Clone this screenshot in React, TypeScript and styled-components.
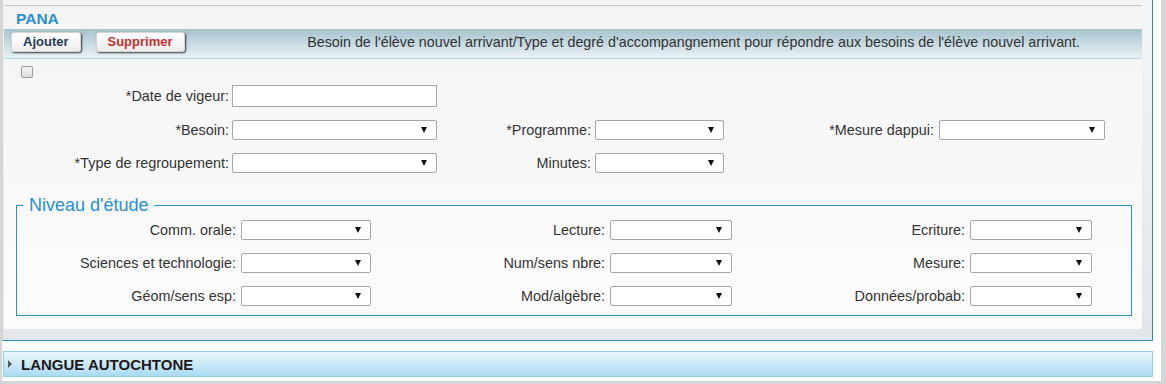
import styled, { createGlobalStyle } from 'styled-components';

const GlobalStyle = createGlobalStyle`
    html, body {
        margin: 0;
        padding: 0;
    }
    body {
        background: #d6d6d6;
        font-family: "Liberation Sans", Arial, Helvetica, sans-serif;
        font-size: 14.4px;
        color: #333;
    }
    * { box-sizing: border-box; }
`;

const Page = styled.div`
    width: 1166px;
    height: 384px;
    padding: 0 5px 3px 2px;
`;

const Wrapper = styled.div`
    display: flex;
    flex-direction: column;
    gap: 10px;
    height: 100%;
    padding: 0 8px 3px 0;
    background: #fff;
`;

const Panel = styled.section`
    padding: 5px 10px 11px 1px;
    border-left: 1px solid #d2d2d2;
    border-right: 1px solid #2a8cc4;
    border-bottom: 1px solid #2a8cc4;
    background: linear-gradient(#f3f5f7, #e3e6ea);
`;

const Content = styled.div`
    padding-bottom: 13px;
    border-top: 1px solid #c6c6c6;
    background: linear-gradient(#f4f4f4, #fcfcfc);
`;

const Title = styled.h2`
    margin: 0;
    height: 23px;
    padding: 1px 0 0 12px;
    font-size: 15.5px;
    line-height: 23px;
    font-weight: bold;
    color: #2b8fcf;
`;

const Toolbar = styled.div`
    display: flex;
    align-items: flex-start;
    height: 30px;
    padding: 3px 0 0 7px;
    border-bottom: 1px solid #b7d7ea;
    background: linear-gradient(#a6c2ce, #e9f2f6);
`;

const Button = styled.button<{ $danger?: boolean }>`
    height: 20px;
    margin-right: 15px;
    padding: 0 11px;
    border: 1px solid #d4d4d4;
    border-radius: 3px;
    background: linear-gradient(#ffffff, #ececec);
    box-shadow: 1px 1px 2px rgba(0, 0, 0, 0.75);
    font-family: inherit;
    font-size: 13px;
    font-weight: bold;
    line-height: 18px;
    color: ${p => (p.$danger ? '#c43030' : '#1d3b5b')};
`;

const Description = styled.div`
    margin-left: auto;
    padding-right: 62px;
    font-size: 14.3px;
    line-height: 20px;
    color: #333;
    white-space: nowrap;
`;

const Check = styled.input.attrs({ type: 'checkbox' })`
    appearance: none;
    display: block;
    width: 12px;
    height: 12px;
    margin: 7px 0 0 17px;
    border: 1px solid #9a9a9a;
    border-radius: 2px;
    background: linear-gradient(#f4f4f4, #dcdcdc);
`;

const FormGrid = styled.div`
    display: grid;
    grid-template-columns: 228px 205px 158px 129px 215px 166px;
    grid-template-rows: 22px 20px 20px;
    row-gap: 13px;
    align-items: center;
    margin-top: 7px;
`;

const Label = styled.label<{ $pad: number }>`
    padding-right: ${p => p.$pad}px;
    text-align: right;
    white-space: nowrap;
    color: #333;
`;

const TextInput = styled.input`
    width: 100%;
    height: 22px;
    margin: 0;
    border: 1px solid #a9a9a9;
    background: #fff;
`;

const SelectBox = styled.div`
    position: relative;
    height: 20px;
`;

const NativeSelect = styled.select`
    appearance: none;
    width: 100%;
    height: 100%;
    margin: 0;
    padding: 0 4px;
    border: 1px solid #a6a6a6;
    border-radius: 2px;
    background: #fff;
    font: 13px "Liberation Sans", Arial, sans-serif;
`;

const Caret = styled.span`
    position: absolute;
    right: 10px;
    top: 7px;
    border-left: 3px solid transparent;
    border-right: 3px solid transparent;
    border-top: 6px solid #111;
    pointer-events: none;
`;

const Fieldset = styled.fieldset`
    margin: 22px 10px 0 12px;
    padding: 5px 0 9px;
    border: 1px solid #2a90c8;
`;

const Legend = styled.legend`
    margin-left: 6px;
    padding: 0 5px 0 6px;
    font-size: 18px;
    line-height: 20px;
    color: #2b8fcf;
`;

const LevelGrid = styled.div`
    display: grid;
    grid-template-columns: 224px 130px 239px 122px 238px 122px;
    grid-auto-rows: 20px;
    row-gap: 13px;
    align-items: center;
`;

const Collapsed = styled.div`
    display: flex;
    align-items: center;
    height: 26px;
    margin-left: 1px;
    padding-left: 4px;
    border: 1px solid #95cbe6;
    background: linear-gradient(#ecf7fd, #a9dbf2);
    font-size: 15px;
    font-weight: bold;
    color: #231818;
`;

const Arrow = styled.span`
    width: 0;
    height: 0;
    margin-right: 9px;
    border-top: 4px solid transparent;
    border-bottom: 4px solid transparent;
    border-left: 4px solid #5a5a5a;
`;

function Select() {
    return (
        <SelectBox>
            <NativeSelect defaultValue="">
                <option value=""></option>
            </NativeSelect>
            <Caret />
        </SelectBox>
    );
}

const mainPads = [3, 4, 5];

const mainRows: (string | null)[][] = [
    ['*Besoin:', '*Programme:', '*Mesure dappui:'],
    ['*Type de regroupement:', 'Minutes:', null],
];

const levelRows = [
    ['Comm. orale:', 'Lecture:', 'Ecriture:'],
    ['Sciences et technologie:', 'Num/sens nbre:', 'Mesure:'],
    ['Géom/sens esp:', 'Mod/algèbre:', 'Données/probab:'],
];

export default function App() {
    return (
        <>
            <GlobalStyle />
            <Page>
                <Wrapper>
                    <Panel>
                        <Content>
                            <Title>PANA</Title>
                            <Toolbar>
                                <Button>Ajouter</Button>
                                <Button $danger>Supprimer</Button>
                                <Description>
                                    Besoin de l'élève nouvel arrivant/Type et degré d'accompangnement pour répondre aux besoins de l'élève nouvel arrivant.
                                </Description>
                            </Toolbar>
                            <Check />
                            <FormGrid>
                                <Label $pad={3}>*Date de vigeur:</Label>
                                <TextInput type="text" />
                                <span />
                                <span />
                                <span />
                                <span />
                                {mainRows.map(row =>
                                    row.map((label, i) =>
                                        label ? (
                                            [
                                                <Label key={label} $pad={mainPads[i]}>{label}</Label>,
                                                <Select key={label + '-s'} />,
                                            ]
                                        ) : (
                                            [<span key={'e' + i} />, <span key={'f' + i} />]
                                        )
                                    )
                                )}
                            </FormGrid>
                            <Fieldset>
                                <Legend>Niveau d'étude</Legend>
                                <LevelGrid>
                                    {levelRows.map(row =>
                                        row.map(label => [
                                            <Label key={label} $pad={5}>{label}</Label>,
                                            <Select key={label + '-s'} />,
                                        ])
                                    )}
                                </LevelGrid>
                            </Fieldset>
                        </Content>
                    </Panel>
                    <Collapsed>
                        <Arrow />
                        LANGUE AUTOCHTONE
                    </Collapsed>
                </Wrapper>
            </Page>
        </>
    );
}
